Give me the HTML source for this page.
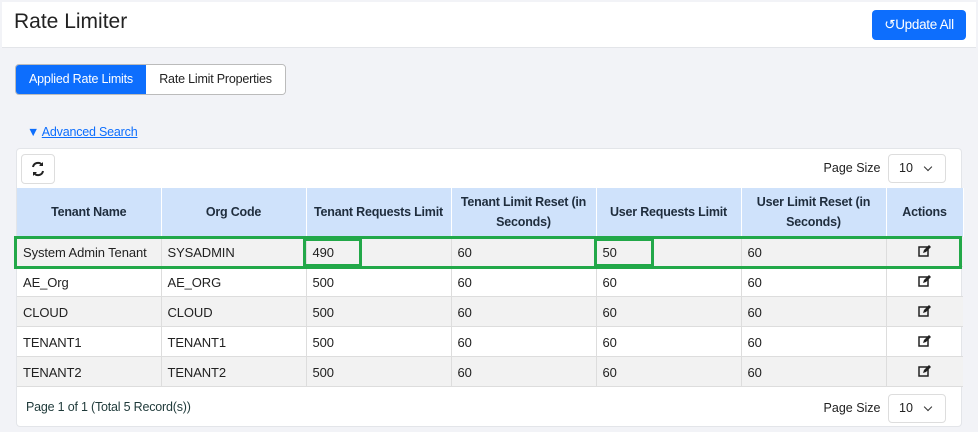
<!DOCTYPE html>
<html><head><style>
*{box-sizing:border-box;margin:0;padding:0}
body{width:978px;height:432px;background:#f2f3f7;font-family:"Liberation Sans",sans-serif;color:#212529;position:relative;overflow:hidden;font-size:13px}
.hdr{position:absolute;left:2px;top:2px;width:974px;height:46px;background:#fff;border-bottom:1px solid #e3e5e9}
.hdr h1{position:absolute;left:12px;top:8px;font-size:21px;font-weight:400;color:#222}
.upd{position:absolute;right:10px;top:8px;width:94px;height:30px;background:#0d6efd;border-radius:4px;color:#fff;font-size:13.5px;line-height:30px;text-align:center;letter-spacing:-0.3px}
.tabs{position:absolute;left:15px;top:64px;height:31px;display:flex;border:1px solid #bbb;border-radius:4px;overflow:hidden;font-size:12.5px;letter-spacing:-0.2px}
.tabs div{line-height:29px;text-align:center}
.t1{background:#0d6efd;color:#fff;width:130px}
.t2{background:#fff;color:#222;width:139px}
.adv{position:absolute;left:27px;top:125px;color:#0d6efd;font-size:12.5px;letter-spacing:-0.2px}
.adv span{text-decoration:underline}
.card{position:absolute;left:16px;top:148px;width:946px;height:279px;background:#fff;border:1px solid #e3e5e9;border-radius:4px}
.ref{position:absolute;left:4px;top:5px;width:34px;height:30px;border:1px solid #ddd;border-radius:4px;background:#fff}
.ps{position:absolute;right:15px;font-size:12.5px;color:#222}
.ps .sel{display:inline-block;width:58px;height:29px;border:1px solid #ddd;border-radius:4px;margin-left:4px;padding-left:10px;line-height:27px;vertical-align:middle;position:relative}
.ps .sel:after{content:"";position:absolute;right:14px;top:9px;width:5px;height:5px;border-right:1.5px solid #333;border-bottom:1.5px solid #333;transform:rotate(45deg)}
table{position:absolute;left:0;top:39px;width:946px;border-collapse:collapse;font-size:12.5px;table-layout:fixed;letter-spacing:-0.2px}
th{background:#cfe2fb;height:48px;font-weight:700;color:#1f2d3d;border-right:1px solid #fff;text-align:center;line-height:20px;padding:0 4px}
td{height:30px;padding:3px 6px 0;border-right:1px solid #ddd;border-top:1px solid #ddd;border-bottom:1px solid #ddd;color:#222;font-size:13px;letter-spacing:-0.1px}
tr:nth-child(even) td{background:#f2f2f2}
td:last-child{text-align:center;border-right:none}
.foot{position:absolute;left:9px;top:251px;color:#1f3a3a;font-size:12.5px;letter-spacing:-0.2px}
.g{position:absolute;border:3px solid #22a849}
</style></head><body>
<div class="hdr"><h1>Rate Limiter</h1><div class="upd">↺Update All</div></div>
<div class="tabs"><div class="t1">Applied Rate Limits</div><div class="t2">Rate Limit Properties</div></div>
<div class="adv">▼ <span>Advanced Search</span></div>
<div class="card">
<div class="ref"><svg width="32" height="28" viewBox="0 0 32 28"><path d="M11 12a5 5 0 0 1 9-2M21 16a5 5 0 0 1-9 2" stroke="#222" stroke-width="2" fill="none"/><path d="M21 7v4h-4zM11 21v-4h4z" fill="#222"/></svg></div>
<div class="ps" style="top:5px">Page Size <span class="sel">10</span></div>
<table>
<colgroup><col style="width:144px"><col style="width:145px"><col style="width:145px"><col style="width:145px"><col style="width:145px"><col style="width:145px"><col style="width:77px"></colgroup>
<tr><th>Tenant Name</th><th>Org Code</th><th>Tenant Requests Limit</th><th>Tenant Limit Reset (in Seconds)</th><th>User Requests Limit</th><th>User Limit Reset (in Seconds)</th><th>Actions</th></tr>
<tr><td>System Admin Tenant</td><td>SYSADMIN</td><td>490</td><td>60</td><td>50</td><td>60</td><td>E</td></tr>
<tr><td>AE_Org</td><td>AE_ORG</td><td>500</td><td>60</td><td>60</td><td>60</td><td>E</td></tr>
<tr><td>CLOUD</td><td>CLOUD</td><td>500</td><td>60</td><td>60</td><td>60</td><td>E</td></tr>
<tr><td>TENANT1</td><td>TENANT1</td><td>500</td><td>60</td><td>60</td><td>60</td><td>E</td></tr>
<tr><td>TENANT2</td><td>TENANT2</td><td>500</td><td>60</td><td>60</td><td>60</td><td>E</td></tr>
</table>
<div class="foot">Page 1 of 1 (Total 5 Record(s))</div>
<div class="ps" style="top:245px">Page Size <span class="sel">10</span></div>
</div>
<div class="g" style="left:14px;top:236px;width:948px;height:33px"></div>
<div class="g" style="left:303px;top:238px;width:59px;height:29px"></div>
<div class="g" style="left:594px;top:238px;width:60px;height:29px"></div>
<script>
document.querySelectorAll('td:last-child').forEach(function(t){t.innerHTML='<svg width="13" height="12" viewBox="0 0 13 12"><rect x="1" y="2" width="9" height="9" fill="none" stroke="#222" stroke-width="1.5"/><path d="M5 8l1-3 5-5 2 2-5 5z" fill="#222"/></svg>';});
</script>
</body></html>
